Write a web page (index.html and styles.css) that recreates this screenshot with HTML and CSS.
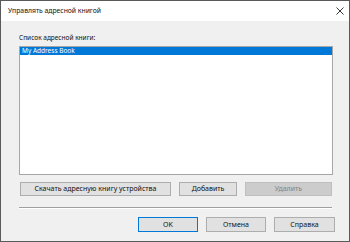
FILE: index.html
```html
<!DOCTYPE html>
<html lang="ru">
<head>
<meta charset="utf-8">
<link rel="stylesheet" href="styles.css">
</head>
<body>
<div class="dialog">
  <div class="titlebar">
    <span class="title">Управлять адресной книгой</span>
    <svg class="close" width="8" height="8" viewBox="0 0 8 8"><path d="M0.5 0.5 L7.5 7.5 M7.5 0.5 L0.5 7.5" stroke="#222" stroke-width="0.9" fill="none"/></svg>
  </div>
  <div class="content">
    <div class="label">Список адресной книги:</div>
    <div class="listbox">
      <div class="item selected">My Address Book</div>
    </div>
    <div class="row actions">
      <button class="btn wide">Скачать адресную книгу устройства</button>
      <button class="btn mid">Добавить</button>
      <button class="btn del" disabled>Удалить</button>
    </div>
    <div class="sep"></div>
    <div class="row footer">
      <button class="btn foot default">OK</button>
      <button class="btn foot">Отмена</button>
      <button class="btn foot last">Справка</button>
    </div>
  </div>
</div>
</body>
</html>
```
FILE: styles.css
```css
html, body {
  margin: 0;
  padding: 0;
  background: #f0f0f0;
}
.dialog {
  width: 350px;
  height: 242px;
  box-sizing: border-box;
  border: 1px solid #5a5a5a;
  background: #f0f0f0;
  font-family: "Noto Sans", "DejaVu Sans", sans-serif;
  color: #000;
  display: flex;
  flex-direction: column;
}
.titlebar {
  height: 19px;
  background: #fff;
  display: flex;
  align-items: center;
  justify-content: space-between;
  padding: 0 5px 1px 7px;
}
.title {
  font-size: 6.8px;
  line-height: 10px;
  color: #111;
}
.close {
  display: block;
}
.content {
  padding: 12px 16px 0 18px;
  display: flex;
  flex-direction: column;
}
.label {
  font-size: 6.5px;
  line-height: 10px;
  height: 10px;
  margin-bottom: 3px;
  color: #111;
}
.listbox {
  height: 129px;
  box-sizing: border-box;
  border: 1px solid #a6a6a6;
  background: #fff;
}
.item {
  font-size: 6.5px;
  line-height: 8px;
  height: 8px;
  padding-left: 2px;
}
.item.selected {
  background: #0078d7;
  color: #fff;
}
.row {
  display: flex;
}
.actions {
  margin-top: 7px;
  gap: 8px;
}
.btn {
  box-sizing: border-box;
  border: 1px solid #adadad;
  background: #e1e1e1;
  font-family: "Noto Sans", "DejaVu Sans", sans-serif;
  font-size: 7px;
  color: #111;
  padding: 0;
  margin: 0;
  height: 14px;
  line-height: 12px;
}
.btn.wide {
  width: 151px;
  margin-left: 1px;
}
.btn.mid {
  width: 58px;
}
.btn.del {
  flex: 1;
  margin-right: 1px;
  background: #cccccc;
  border-color: #bfbfbf;
  color: #838383;
}
.sep {
  margin-top: 11px;
  height: 1px;
  background: #a0a0a0;
  border-bottom: 1px solid #fff;
  margin-right: 1px;
}
.footer {
  margin-top: 8px;
  justify-content: flex-end;
  gap: 8px;
  margin-right: -2px;
}
.btn.foot {
  width: 60px;
  height: 15px;
  line-height: 13px;
}
.btn.default {
  border-color: #0078d7;
}
.btn.last {
  width: 61px;
}
```
